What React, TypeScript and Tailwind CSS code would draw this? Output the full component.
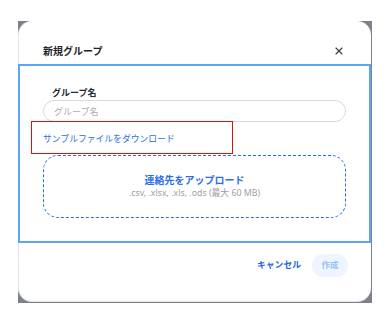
import { X } from "lucide-react";

const FONT = { fontFamily: '"Noto Sans", "Noto Sans CJK JP", sans-serif' };

export default function App() {
  return (
    <div className="h-[313px] w-[386px] bg-white pl-[18px] pt-[21px]" style={FONT}>
      {/* backdrop peeking around the dialog corners */}
      <div className="h-[282px] w-[354px] bg-[#7d8189] pb-[1px] pr-[1px]">
        <div className="flex h-full w-full flex-col rounded-[14px] border-l border-b border-[#e3e5e9] bg-white">
          <div className="flex h-[43px] shrink-0 items-start justify-between pl-[24px] pr-[26px] pt-[23px]">
            <h2 className="text-[10px] font-bold leading-[14px] text-[#1f2328]">新規グループ</h2>
            <button type="button" className="mt-[1px] text-[#3a404c]">
              <X size={12} strokeWidth={2.3} />
            </button>
          </div>

          <div className="-ml-px flex flex-col border-2 border-[#5ba6f8] px-[23px] pb-[23px] pt-[21px]">
            <label className="pl-[9px] text-[9px] font-bold leading-[12px] text-[#24292f]">グループ名</label>
            <input
              type="text"
              placeholder="グループ名"
              className="mt-[1px] h-[22px] w-full rounded-full border border-[#d6d9de] px-[10px] text-[9px] text-[#333] outline-none placeholder:text-[#a9aeb6]"
            />
            <div className="relative flex h-[33px] items-center">
              <a href="#" className="text-[8.8px] leading-[12px] text-[#2d6fe3]">
                サンプルファイルをダウンロード
              </a>
              {/* annotation highlight */}
              <div className="pointer-events-none absolute -left-[12px] -top-[1px] h-[33px] w-[202px] border border-[#e30d0d]" />
            </div>
            <button
              type="button"
              className="flex h-[63px] w-full flex-col items-center justify-center rounded-[15px] border-[1.5px] border-dashed border-[#1f6fec] pb-[2px]"
            >
              <span className="text-[10px] font-bold leading-[14px] text-[#2d6fe3]">連絡先をアップロード</span>
              <span className="text-[8.8px] leading-[12px] text-[#9aa0a8]">.csv, .xlsx, .xls, .ods (最大 60 MB)</span>
            </button>
          </div>

          <div className="flex items-center justify-end gap-[11px] pr-[23px] pt-[11px]">
            <button type="button" className="text-[8.8px] font-bold text-[#2466e0]">キャンセル</button>
            <button
              type="button"
              disabled
              className="h-[23px] w-[36px] rounded-full bg-[#eef5ff] text-[8.5px] font-bold text-[#98c2fa]"
            >
              作成
            </button>
          </div>
        </div>
      </div>
    </div>
  );
}
